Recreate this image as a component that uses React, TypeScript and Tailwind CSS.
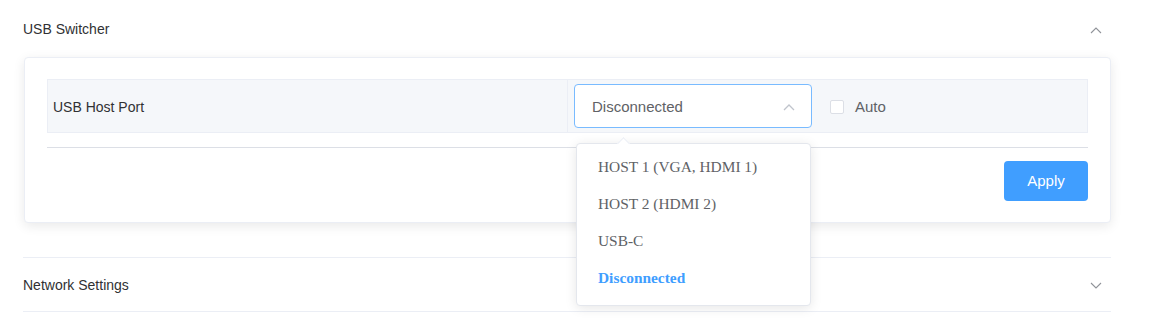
import { useState } from "react";

const options = ["HOST 1 (VGA, HDMI 1)", "HOST 2 (HDMI 2)", "USB-C", "Disconnected"];

const Chevron = ({ up }: { up?: boolean }) => (
  <svg width="12" height="8" viewBox="0 0 12 8" fill="none">
    <polyline
      points={up ? "1,7 6,2 11,7" : "1,1 6,6 11,1"}
      stroke="#909399"
      strokeWidth="1.1"
    />
  </svg>
);

const App = () => {
  const [value, setValue] = useState("Disconnected");
  const [open, setOpen] = useState(true);

  return (
    <div className="min-h-[324px] bg-white font-['Liberation_Sans',Arial,sans-serif]">
      <div className="ml-[23px] w-[1088px]">
        {/* USB Switcher */}
        <div className="border-b border-[#ebeef5]">
          <div className="flex h-[57px] items-center justify-between pt-[2px] pr-[9px] text-[14px] text-[#303133]">
            <span>USB Switcher</span>
            <Chevron up />
          </div>
          <div className="pb-[34px]">
            <div className="ml-[1px] rounded border border-[#ebeef5] bg-white px-[22px] pt-[21px] pb-[21px] shadow-[0_3px_12px_0_rgba(0,0,0,0.09)]">
              <div className="flex h-[54px] border border-[#ebeef5] bg-[#f5f7fa]">
                <div className="flex w-[520px] items-center border-r border-[#ebeef5] pt-[2px] pl-[5px] text-[14px] text-[#303133]">
                  USB Host Port
                </div>
                <div className="flex items-center pl-[6px]">
                  <div className="relative">
                    <button
                      onClick={() => setOpen(!open)}
                      className="flex h-[44px] w-[238px] items-center justify-between rounded border border-[#79bbff] bg-white pt-[2px] pl-[17px] pr-[16px] text-[15px] text-[#606266]"
                    >
                      <span>{value}</span>
                      <svg width="12" height="8" viewBox="0 0 12 8" fill="none">
                        <polyline
                          points={open ? "1,7 6,2 11,7" : "1,1 6,6 11,1"}
                          stroke="#c0c4cc"
                          strokeWidth="1.3"
                        />
                      </svg>
                    </button>

                    {open && (
                      <div className="absolute left-[2px] top-full z-10 mt-[15px] w-[235px] rounded border border-[#e4e7ed] bg-white pt-[4px] pb-[9px] shadow-[0_2px_12px_0_rgba(0,0,0,0.1)]">
                        <div className="absolute -top-[5px] left-[42px] h-[9px] w-[9px] rotate-45 border-l border-t border-[#ebeef5] bg-white" />
                        {options.map((opt) => (
                          <div
                            key={opt}
                            onClick={() => {
                              setValue(opt);
                              setOpen(false);
                            }}
                            className={`flex h-[37px] cursor-pointer items-center pl-[21px] font-['Liberation_Serif','Times_New_Roman',serif] text-[15.4px] ${
                              opt === value ? "font-bold text-[#409eff]" : "text-[#606266]"
                            }`}
                          >
                            {opt}
                          </div>
                        ))}
                      </div>
                    )}
                  </div>
                  <label className="ml-[18px] flex items-center gap-[11px] pt-[2px] text-[15px] text-[#606266]">
                    <span className="h-[14px] w-[14px] rounded-[2px] border border-[#dcdfe6] bg-white" />
                    Auto
                  </label>
                </div>
              </div>

              <div className="mt-[14px] border-t border-[#dcdfe6]" />

              <div className="mt-[13px] flex justify-end">
                <button className="h-[40px] w-[84px] rounded bg-[#409eff] text-[15px] text-white">
                  Apply
                </button>
              </div>
            </div>
          </div>
        </div>

        {/* Network Settings */}
        <div className="border-b border-[#ebeef5]">
          <div className="flex h-[53px] items-center justify-between pt-[2px] pr-[9px] text-[14px] text-[#303133]">
            <span>Network Settings</span>
            <Chevron />
          </div>
        </div>
      </div>
    </div>
  );
};

export default App;
